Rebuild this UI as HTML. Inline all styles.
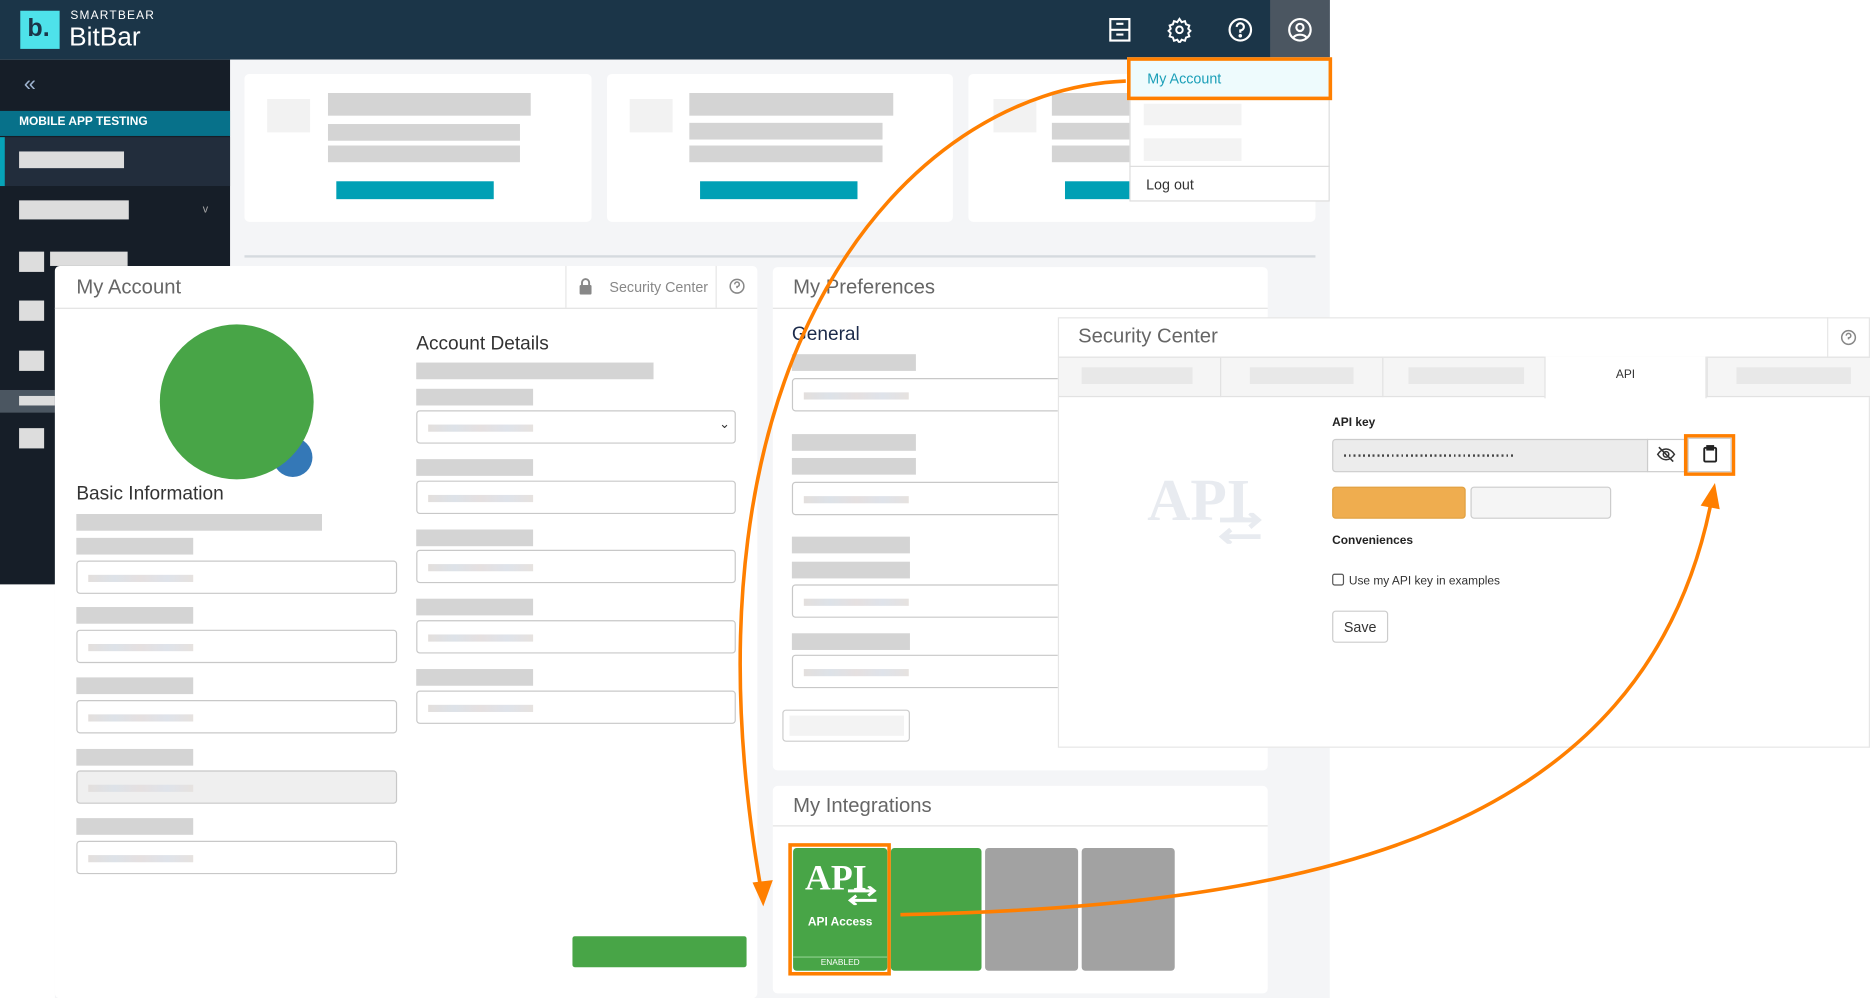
<!DOCTYPE html>
<html><head><meta charset="utf-8">
<style>
html,body{margin:0;padding:0;width:1870px;height:998px;overflow:hidden;background:#fff;font-family:"Liberation Sans",sans-serif}
#s{position:absolute;left:0;top:0;width:1568px;height:837px;transform:scale(1.19260);transform-origin:0 0;overflow:hidden;background:#fff}
.a{position:absolute;box-sizing:border-box}
.b{position:absolute;background:#d4d4d4}
.card{position:absolute;background:#fff;border-radius:4px}
.inp{position:absolute;border:1px solid #c8c8c8;border-radius:3px;background:#fff;box-sizing:border-box}
.inp::after{content:"";position:absolute;left:9px;top:11px;width:88px;height:6px;background:linear-gradient(90deg,#e3dfdd,#dde2e8,#e5e0e0,#dfe3ea,#e6e2df)}
.ttl{position:absolute;font-size:17px;color:#666;font-weight:300}
</style></head><body><div id="s">
<!-- header -->
<div class="a" style="left:0;top:0;width:1115px;height:50px;background:#1b3548"></div>
<div class="a" style="left:1065px;top:0;width:50px;height:50px;background:#4b5661"></div>
<div class="a" style="left:17px;top:9px;width:33px;height:32px;background:#4ee2ea;color:#1b3548;font-size:21px;font-weight:bold;padding:3px 0 0 6px">b.</div>
<div class="a" style="left:59px;top:8px;color:#fff;font-size:10px;letter-spacing:1px">SMARTBEAR</div>
<div class="a" style="left:58px;top:18px;color:#fff;font-size:22px">BitBar</div>
<svg class="a" style="left:928px;top:14px" width="22" height="22" viewBox="0 0 22 22" fill="none" stroke="#fff" stroke-width="1.8"><rect x="3" y="2" width="16" height="18"/><line x1="3" y1="11" x2="19" y2="11"/><line x1="8" y1="6" x2="14" y2="6"/><line x1="8" y1="15" x2="14" y2="15"/></svg>
<svg class="a" style="left:978px;top:14px" width="22" height="22" viewBox="0 0 24 24" fill="none" stroke="#fff" stroke-width="1.8"><circle cx="12" cy="12" r="3"/><path d="M12 2l2 3 3-1 1 3 3 1-1 3 2 2-2 2 1 3-3 1-1 3-3-1-2 3-2-3-3 1-1-3-3-1 1-3-2-2 2-2-1-3 3-1 1-3 3 1z"/></svg>
<svg class="a" style="left:1029px;top:14px" width="22" height="22" viewBox="0 0 22 22" fill="none" stroke="#fff" stroke-width="1.8"><circle cx="11" cy="11" r="9"/><path d="M8 8.5a3 3 0 1 1 3 3v2"/><circle cx="11" cy="16" r=".6" fill="#fff"/></svg>
<svg class="a" style="left:1079px;top:14px" width="22" height="22" viewBox="0 0 22 22" fill="none" stroke="#fff" stroke-width="1.8"><circle cx="11" cy="11" r="9"/><circle cx="11" cy="9" r="3"/><path d="M5.5 17.5a6 4 0 0 1 11 0"/></svg>
<!-- sidebar -->
<div class="a" style="left:0;top:50px;width:193px;height:440px;background:#161e28"></div>
<div class="a" style="left:20px;top:60px;color:#9fb4d0;font-size:18px">«</div>
<div class="a" style="left:0;top:93px;width:193px;height:21px;background:#07718a;color:#fff;font-size:10px;font-weight:bold;padding:4px 0 0 16px">MOBILE APP TESTING</div>
<div class="a" style="left:0;top:115px;width:193px;height:41px;background:#222d3c;border-left:4px solid #07a3b8"></div>
<div class="b" style="left:16px;top:127px;width:88px;height:14px;background:#ddd"></div>
<div class="b" style="left:16px;top:168px;width:92px;height:16px;background:#ddd"></div>
<div class="a" style="left:170px;top:170px;color:#aaa;font-size:9px">v</div>
<div class="b" style="left:16px;top:211px;width:21px;height:17px;background:#ddd"></div>
<div class="b" style="left:42px;top:211px;width:65px;height:12px;background:#ddd"></div>
<div class="b" style="left:16px;top:252px;width:21px;height:17px;background:#ddd"></div>
<div class="b" style="left:16px;top:294px;width:21px;height:17px;background:#ddd"></div>
<div class="a" style="left:0;top:327px;width:46px;height:19px;background:#4b5661"></div>
<div class="b" style="left:16px;top:332px;width:30px;height:8px;background:#ddd"></div>
<div class="b" style="left:16px;top:359px;width:21px;height:17px;background:#ddd"></div>
<!-- main bg -->
<div class="a" style="left:193px;top:50px;width:922px;height:787px;background:#f4f5f7"></div>
<div class="a" style="left:46px;top:490px;width:147px;height:347px;background:#f4f5f7"></div>
<!-- cards -->
<div class="card" style="left:205px;top:62px;width:291px;height:124px"></div>
<div class="card" style="left:509px;top:62px;width:290px;height:124px"></div>
<div class="card" style="left:812px;top:62px;width:291px;height:124px"></div>
<div class="b" style="left:224px;top:83px;width:36px;height:28px;background:#f2f2f2"></div>
<div class="b" style="left:275px;top:78px;width:170px;height:19px"></div>
<div class="b" style="left:275px;top:104px;width:161px;height:14px"></div>
<div class="b" style="left:275px;top:122px;width:161px;height:14px"></div>
<div class="b" style="left:282px;top:152px;width:132px;height:15px;background:#00a0b5"></div>
<div class="b" style="left:528px;top:83px;width:36px;height:28px;background:#f2f2f2"></div>
<div class="b" style="left:578px;top:78px;width:171px;height:19px"></div>
<div class="b" style="left:578px;top:103px;width:162px;height:14px"></div>
<div class="b" style="left:578px;top:122px;width:162px;height:14px"></div>
<div class="b" style="left:587px;top:152px;width:132px;height:15px;background:#00a0b5"></div>
<div class="b" style="left:833px;top:83px;width:36px;height:28px;background:#f2f2f2"></div>
<div class="b" style="left:882px;top:78px;width:70px;height:19px"></div>
<div class="b" style="left:882px;top:103px;width:70px;height:14px"></div>
<div class="b" style="left:882px;top:122px;width:70px;height:14px"></div>
<div class="b" style="left:893px;top:152px;width:60px;height:15px;background:#00a0b5"></div>
<div class="a" style="left:205px;top:214px;width:898px;height:2px;background:#d5dadf"></div>
<!-- dropdown -->
<div class="a" style="left:947px;top:50px;width:168px;height:119px;background:#fff;border:1px solid #ddd"></div>
<div class="a" style="left:945px;top:48px;width:172px;height:36px;background:#eefbfd;border:3px solid #ff7f00;color:#1b9fb8;font-size:12px;padding:8px 0 0 14px">My Account</div>
<div class="b" style="left:959px;top:87px;width:82px;height:18px;background:#f3f3f3"></div>
<div class="b" style="left:959px;top:116px;width:82px;height:19px;background:#f3f3f3"></div>
<div class="a" style="left:947px;top:139px;width:168px;height:1px;background:#ddd"></div>
<div class="a" style="left:961px;top:148px;font-size:12px;color:#333">Log out</div>
<!-- my account panel -->
<div class="a" style="left:46px;top:223px;width:589px;height:614px;background:#fff;border-radius:4px"></div>
<div class="a" style="left:46px;top:258px;width:589px;height:1px;background:#e2e2e2"></div>
<div class="ttl" style="left:64px;top:231px">My Account</div>
<div class="a" style="left:474px;top:223px;width:1px;height:35px;background:#e6e6e6"></div>
<div class="a" style="left:600px;top:223px;width:1px;height:35px;background:#e6e6e6"></div>
<svg class="a" style="left:485px;top:233px" width="12" height="14" viewBox="0 0 12 14"><path d="M3 6V4a3 3 0 0 1 6 0v2" fill="none" stroke="#888" stroke-width="1.6"/><rect x="1" y="6" width="10" height="8" rx="1" fill="#888"/></svg>
<div class="a" style="left:511px;top:234px;font-size:12px;color:#888">Security Center</div>
<svg class="a" style="left:611px;top:233px" width="14" height="14" viewBox="0 0 22 22" fill="none" stroke="#888" stroke-width="2"><circle cx="11" cy="11" r="9"/><path d="M8 8.5a3 3 0 1 1 3 3v2"/></svg>
<div class="a" style="left:229px;top:367px;width:33px;height:33px;border-radius:50%;background:#3478b7"></div>
<div class="a" style="left:134px;top:272px;width:129px;height:130px;border-radius:50%;background:#48a547"></div>
<div class="a" style="left:64px;top:406px;font-size:16px;color:#333">Basic Information</div>
<div class="b" style="left:64px;top:431px;width:206px;height:14px"></div>
<div class="b" style="left:64px;top:451px;width:98px;height:14px"></div>
<div class="inp" style="left:64px;top:470px;width:269px;height:28px"></div>
<div class="b" style="left:64px;top:509px;width:98px;height:14px"></div>
<div class="inp" style="left:64px;top:528px;width:269px;height:28px"></div>
<div class="b" style="left:64px;top:568px;width:98px;height:14px"></div>
<div class="inp" style="left:64px;top:587px;width:269px;height:28px"></div>
<div class="b" style="left:64px;top:628px;width:98px;height:14px"></div>
<div class="inp" style="left:64px;top:646px;width:269px;height:28px;background:#efefef"></div>
<div class="b" style="left:64px;top:686px;width:98px;height:14px"></div>
<div class="inp" style="left:64px;top:705px;width:269px;height:28px"></div>
<div class="a" style="left:349px;top:280px;font-size:16px;color:#333">Account Details</div>
<div class="b" style="left:349px;top:304px;width:199px;height:14px"></div>
<div class="b" style="left:349px;top:326px;width:98px;height:14px"></div>
<div class="inp" style="left:349px;top:344px;width:268px;height:28px"></div>
<div class="a" style="left:603px;top:349px;font-size:11px;color:#333">⌄</div>
<div class="b" style="left:349px;top:385px;width:98px;height:14px"></div>
<div class="inp" style="left:349px;top:403px;width:268px;height:28px"></div>
<div class="b" style="left:349px;top:444px;width:98px;height:14px"></div>
<div class="inp" style="left:349px;top:461px;width:268px;height:28px"></div>
<div class="b" style="left:349px;top:502px;width:98px;height:14px"></div>
<div class="inp" style="left:349px;top:520px;width:268px;height:28px"></div>
<div class="b" style="left:349px;top:561px;width:98px;height:14px"></div>
<div class="inp" style="left:349px;top:579px;width:268px;height:28px"></div>
<div class="a" style="left:480px;top:785px;width:146px;height:26px;background:#48a547;border-radius:2px"></div>
<!-- preferences -->
<div class="a" style="left:648px;top:224px;width:415px;height:422px;background:#fff;border-radius:4px"></div>
<div class="a" style="left:648px;top:258px;width:415px;height:1px;background:#e2e2e2"></div>
<div class="ttl" style="left:665px;top:231px">My Preferences</div>
<div class="a" style="left:664px;top:272px;font-size:16px;color:#1b2a4a">General</div>
<div class="b" style="left:664px;top:297px;width:104px;height:14px"></div>
<div class="inp" style="left:664px;top:317px;width:240px;height:28px"></div>
<div class="b" style="left:664px;top:364px;width:104px;height:14px"></div>
<div class="b" style="left:664px;top:384px;width:104px;height:14px"></div>
<div class="inp" style="left:664px;top:404px;width:240px;height:28px"></div>
<div class="b" style="left:664px;top:450px;width:99px;height:14px"></div>
<div class="b" style="left:664px;top:471px;width:99px;height:14px"></div>
<div class="inp" style="left:664px;top:490px;width:240px;height:28px"></div>
<div class="b" style="left:664px;top:531px;width:99px;height:14px"></div>
<div class="inp" style="left:664px;top:549px;width:240px;height:28px"></div>
<div class="a" style="left:656px;top:595px;width:107px;height:27px;border:1px solid #ccc;border-radius:3px;background:#fff"></div>
<div class="b" style="left:662px;top:600px;width:96px;height:17px;background:#f3f3f3"></div>
<!-- integrations -->
<div class="a" style="left:648px;top:659px;width:415px;height:174px;background:#fff;border-radius:4px"></div>
<div class="a" style="left:648px;top:692px;width:415px;height:1px;background:#e2e2e2"></div>
<div class="ttl" style="left:665px;top:666px">My Integrations</div>
<div class="a" style="left:661px;top:707px;width:86px;height:111px;border:3px solid #ff7f00"></div>
<div class="a" style="left:665px;top:711px;width:79px;height:103px;background:#48a547;border-radius:3px"></div>
<div class="a" style="left:675px;top:720px;color:#fff;font-family:'Liberation Serif',serif;font-size:30px;font-weight:bold">API</div>
<svg class="a" style="left:710px;top:743px" width="26" height="16" viewBox="0 0 26 16" fill="none" stroke="#fff" stroke-width="2.5"><path d="M1 4h22M18 0l5 4-5 4M25 12H3M8 8l-5 4 5 4"/></svg>
<div class="a" style="left:665px;top:768px;width:79px;text-align:center;color:#fff;font-size:10px;font-weight:bold">API Access</div>
<div class="a" style="left:665px;top:802px;width:79px;height:1px;background:#8ccf8a"></div>
<div class="a" style="left:665px;top:804px;width:79px;text-align:center;color:#fff;font-size:7px">ENABLED</div>
<div class="a" style="left:747px;top:711px;width:76px;height:103px;background:#48a547;border-radius:3px"></div>
<div class="a" style="left:826px;top:711px;width:78px;height:103px;background:#a2a2a2;border-radius:3px"></div>
<div class="a" style="left:907px;top:711px;width:78px;height:103px;background:#a2a2a2;border-radius:3px"></div>
<!-- security center -->
<div class="a" style="left:887px;top:266px;width:681px;height:361px;background:#fff;border:1px solid #e6e6e6"></div>
<div class="a" style="left:904px;top:272px;font-size:17px;color:#666">Security Center</div>
<div class="a" style="left:1532px;top:266px;width:1px;height:34px;background:#e6e6e6"></div>
<svg class="a" style="left:1543px;top:276px" width="14" height="14" viewBox="0 0 22 22" fill="none" stroke="#888" stroke-width="2"><circle cx="11" cy="11" r="9"/><path d="M8 8.5a3 3 0 1 1 3 3v2"/></svg>
<div class="a" style="left:888px;top:299px;width:680px;height:34px;background:#f5f5f5;border-top:1px solid #e2e2e2;border-bottom:1px solid #e2e2e2"></div>
<div class="a" style="left:1023px;top:300px;width:1px;height:33px;background:#e2e2e2"></div>
<div class="a" style="left:1159px;top:300px;width:1px;height:33px;background:#e2e2e2"></div>
<div class="a" style="left:1431px;top:300px;width:1px;height:33px;background:#e2e2e2"></div>
<div class="a" style="left:1295px;top:299px;width:136px;height:35px;background:#fff;border-left:1px solid #e2e2e2;border-right:1px solid #e2e2e2;text-align:center;font-size:10px;color:#333;padding-top:10px">API</div>
<div class="b" style="left:907px;top:308px;width:93px;height:14px;background:#e8e8e8"></div>
<div class="b" style="left:1048px;top:308px;width:87px;height:14px;background:#e8e8e8"></div>
<div class="b" style="left:1181px;top:308px;width:97px;height:14px;background:#e8e8e8"></div>
<div class="b" style="left:1456px;top:308px;width:96px;height:14px;background:#e8e8e8"></div>
<div class="a" style="left:962px;top:390px;color:#e8ebf0;font-family:'Liberation Serif',serif;font-size:50px;font-weight:bold">API</div>
<svg class="a" style="left:1021px;top:430px" width="38" height="26" viewBox="0 0 38 26" fill="none" stroke="#e8ebf0" stroke-width="4"><path d="M2 6h32M27 0l7 6-7 6M36 20H4M11 14l-7 6 7 6"/></svg>
<div class="a" style="left:1117px;top:349px;font-size:10px;font-weight:bold;color:#222">API key</div>
<div class="a" style="left:1117px;top:368px;width:265px;height:28px;background:#ececec;border:1px solid #ccc;border-radius:3px 0 0 3px"></div>
<div class="a" style="left:1127px;top:381px;width:144px;height:2px;background:repeating-linear-gradient(90deg,#444 0 1.6px,transparent 1.6px 4px)"></div>
<div class="a" style="left:1381px;top:368px;width:32px;height:28px;background:#fff;border:1px solid #ccc"></div>
<svg class="a" style="left:1389px;top:374px" width="16" height="14" viewBox="0 0 16 14" fill="none" stroke="#333" stroke-width="1.3"><path d="M1 7c2-3 4.5-4.5 7-4.5S13 4 15 7c-2 3-4.5 4.5-7 4.5S3 10 1 7z"/><circle cx="8" cy="7" r="2.3"/><line x1="2" y1="1" x2="14" y2="13"/></svg>
<div class="a" style="left:1412px;top:364px;width:43px;height:35px;border:3px solid #ff7f00"></div>
<div class="a" style="left:1415px;top:367px;width:37px;height:29px;border:1px solid #ccc;background:#fff"></div>
<svg class="a" style="left:1428px;top:373px" width="12" height="15" viewBox="0 0 12 15" fill="none" stroke="#222" stroke-width="1.6"><rect x="1" y="2.5" width="10" height="11.5" rx="1"/><rect x="3.5" y="1" width="5" height="3" fill="#222"/></svg>
<div class="a" style="left:1117px;top:408px;width:112px;height:27px;background:#efad4f;border:1px solid #e0a040;border-radius:3px"></div>
<div class="a" style="left:1233px;top:408px;width:118px;height:27px;background:#f5f5f5;border:1px solid #ccc;border-radius:3px"></div>
<div class="a" style="left:1117px;top:448px;font-size:10px;font-weight:bold;color:#222">Conveniences</div>
<div class="a" style="left:1117px;top:481px;width:10px;height:10px;border:1px solid #555;border-radius:2px;background:#fff"></div>
<div class="a" style="left:1131px;top:482px;font-size:10px;color:#333">Use my API key in examples</div>
<div class="a" style="left:1117px;top:512px;width:47px;height:27px;border:1px solid #ccc;border-radius:3px;background:#fff;font-size:12px;color:#333;text-align:center;padding-top:6px">Save</div>
<!-- arrows -->
<svg class="a" style="left:0;top:0" width="1568" height="837" viewBox="0 0 1568 837" fill="none">
<path d="M944 68 C 760 75, 560 300, 638 745" stroke="#ff7f00" stroke-width="3"/>
<path d="M631 740 L640 760 L648 738 Z" fill="#ff7f00"/>
<path d="M755 767 C 1100 760, 1380 700, 1435 420" stroke="#ff7f00" stroke-width="3"/>
<path d="M1426 424 L1438 405 L1442 427 Z" fill="#ff7f00"/>
</svg>
</div></body></html>
